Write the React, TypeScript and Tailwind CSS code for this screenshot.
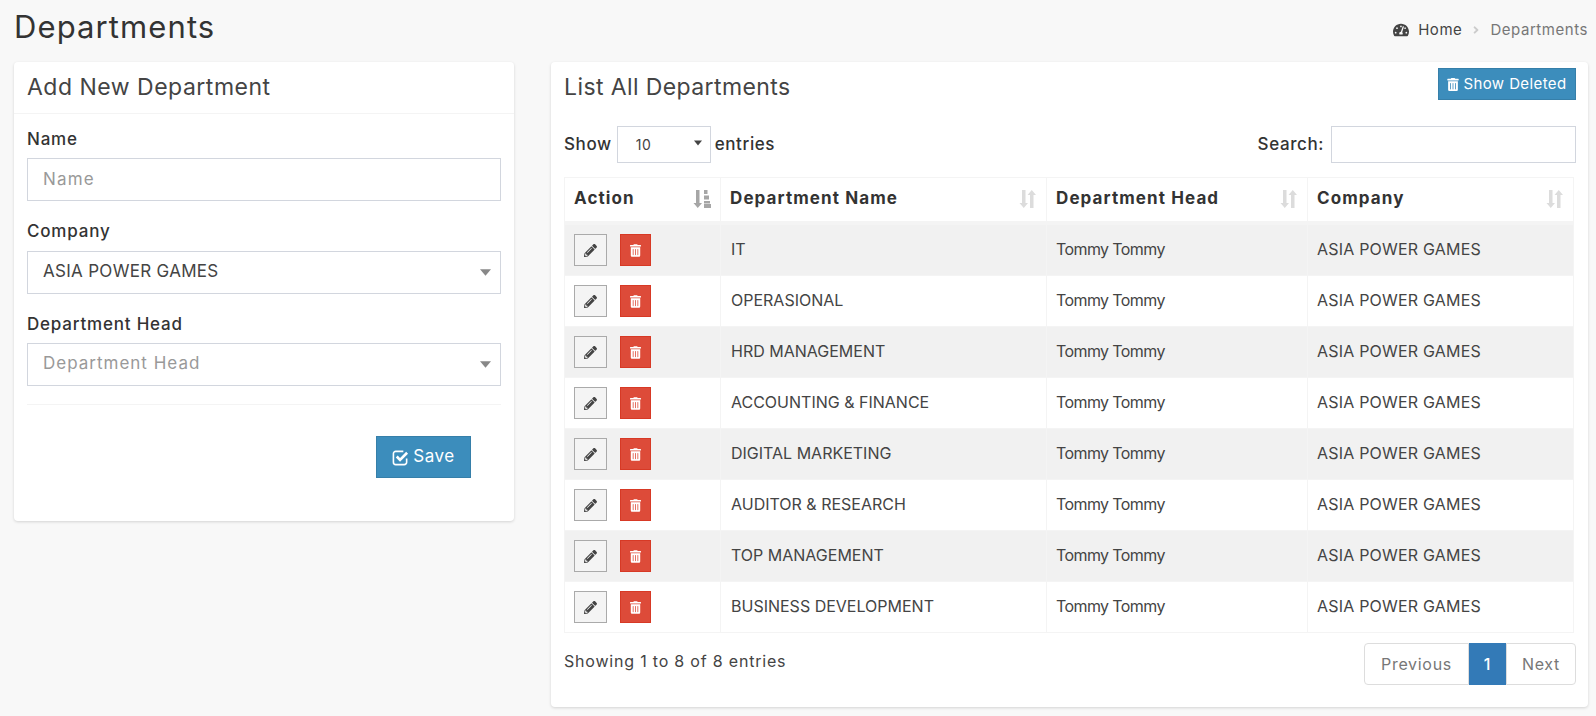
import { FaPencilAlt, FaTachometerAlt, FaTrashAlt, FaAngleRight } from "react-icons/fa";

const rows = [
  "IT",
  "OPERASIONAL",
  "HRD MANAGEMENT",
  "ACCOUNTING & FINANCE",
  "DIGITAL MARKETING",
  "AUDITOR & RESEARCH",
  "TOP MANAGEMENT",
  "BUSINESS DEVELOPMENT",
];

function Caret({ className }: { className: string }) {
  return (
    <svg viewBox="0 0 10 6" className={className}>
      <path d="M0 0h10L5 6z" fill="currentColor" />
    </svg>
  );
}

function SortIcon() {
  return (
    <svg viewBox="0 0 18 20" className="w-[18px] h-[20px] text-[#dcdcdc]">
      <path d="M3 1h3.500v13h2.500L4.750 19 .5 14H3z" fill="currentColor" />
      <path d="M11 19h3.500V6H17l-4.250-5L8.500 6H11z" fill="currentColor" />
    </svg>
  );
}

function SortActiveIcon() {
  return (
    <svg viewBox="0 0 18 20" className="w-[18px] h-[20px] text-[#a6a6a6]">
      <path d="M3 1h3.500v13h2.500L4.750 19 .5 14H3z" fill="currentColor" />
      <path d="M11 1h3.500v4H11zM11 6.500h5v4h-5zM11 12h6v2.500h-6zM11 15h7v4h-7z" fill="currentColor" />
    </svg>
  );
}

function CheckSquareIcon() {
  return (
    <svg viewBox="0 0 18 18" className="w-[17px] h-[17px]" fill="none" stroke="currentColor">
      <path d="M12 2.500H4A2.500 2.500 0 0 0 1.500 5v9A2.500 2.500 0 0 0 4 16.500h9a2.500 2.500 0 0 0 2.500-2.500v-4" strokeWidth="1.700" />
      <path d="M5 8l3.500 3.500L16 4" strokeWidth="2.800" />
    </svg>
  );
}

function SelectField({ value, muted }: { value: string; muted?: boolean }) {
  return (
    <div className="relative">
      <select
        defaultValue={value}
        className={`appearance-none block w-full h-[43px] pb-[2px] border border-[#d2d6de] bg-white pl-[15px] pr-8 text-[17px] rounded-none outline-none ${
          muted ? "text-[#999999] tracking-[1px]" : "text-[#444444] tracking-[0.3px]"
        }`}
      >
        <option>{value}</option>
      </select>
      <Caret className="absolute right-[10px] top-[18px] w-[11px] h-[7px] text-[#888888]" />
    </div>
  );
}

export default function App() {
  return (
    <div className="min-h-[716px] bg-[#f8f8f8] font-['Inter','Liberation_Sans',sans-serif] text-[#444444]">
      <div className="flex justify-between items-start h-[62px] pl-[14px] pr-2">
        <h1 className="pt-[8px] text-[31px] leading-[38px] tracking-[1.100px] text-[#333333]">Departments</h1>
        <div className="flex items-center pt-[20px] text-[15px] leading-[20px] tracking-[0.550px]">
          <FaTachometerAlt className="w-[16px] h-[16px] text-[#444444] mr-[9px]" />
          <span className="text-[#444444]">Home</span>
          <FaAngleRight className="w-3 h-3 mx-[8px] text-[#cccccc]" />
          <span className="text-[#777777]">Departments</span>
        </div>
      </div>

      <div className="flex items-start gap-[37px] pl-[14px] pr-2">
        {/* Add form */}
        <div className="w-[500px] h-[459px] bg-white rounded shadow-[0_1px_3px_rgba(0,0,0,0.15)]">
          <div className="h-[52px] px-[13px] flex items-center border-b border-[#f4f4f4]">
            <h3 className="text-[23px] tracking-[0.5px] text-[#444444]">Add New Department</h3>
          </div>
          <div className="px-[13px] pt-[13px]">
            <label className="block h-[31px] text-[17px] leading-[24px] tracking-[0.8px] font-medium text-[#333333]">Name</label>
            <input
              placeholder="Name"
              className="block w-full h-[43px] pb-[2px] border border-[#d2d6de] px-[15px] text-[17px] tracking-[1.200px] outline-none placeholder:text-[#999999]"
            />
            <label className="block mt-[18px] h-[32px] text-[17px] leading-[24px] tracking-[0.8px] font-medium text-[#333333]">Company</label>
            <SelectField value="ASIA POWER GAMES" />
            <label className="block mt-[18px] h-[31px] text-[17px] leading-[24px] tracking-[0.8px] font-medium text-[#333333]">Department Head</label>
            <SelectField value="Department Head" muted />
            <div className="mt-[18px] border-t border-[#f4f4f4]" />
            <div className="flex justify-end pr-[30px] pt-[31px]">
              <button className="flex items-center justify-center gap-[4px] w-[95px] h-[42px] bg-[#3c8dbc] border border-[#367fa9] text-white text-[17px] tracking-[0.5px]">
                <CheckSquareIcon />
                Save
              </button>
            </div>
          </div>
        </div>

        {/* List */}
        <div className="w-[1037px] h-[645px] bg-white rounded shadow-[0_1px_3px_rgba(0,0,0,0.15)] pl-[13px] pr-3">
          <div className="flex justify-between items-start h-[64px] pt-[6px]">
            <h3 className="pt-[1px] text-[23px] leading-[36px] tracking-[0.4px] text-[#444444]">List All Departments</h3>
            <button className="flex items-center justify-center gap-[4px] w-[138px] h-[32px] bg-[#3c8dbc] border border-[#367fa9] text-white text-[15px] tracking-[0.4px]">
              <FaTrashAlt className="w-[12px] h-[13px]" />
              Show Deleted
            </button>
          </div>

          <div className="flex justify-between items-center h-[37px] text-[17px] tracking-[0.6px] font-medium text-[#333333]">
            <div className="flex items-center gap-[4px]">
              <span className="mr-[1px]">Show</span>
              <div className="relative">
                <select
                  defaultValue="10"
                  className="appearance-none block w-[94px] h-[37px] border border-[#d2d6de] bg-white pl-[18px] text-[14px] font-normal text-[#444444] rounded-none outline-none"
                >
                  <option>10</option>
                </select>
                <Caret className="absolute right-[9px] top-[14px] w-[8px] h-[6px] text-[#444444]" />
              </div>
              <span>entries</span>
            </div>
            <div className="flex items-center gap-[7px]">
              <span>Search:</span>
              <input className="block w-[245px] h-[37px] border border-[#d2d6de] px-3 outline-none" />
            </div>
          </div>

          <table className="mt-[14px] w-[1009px] table-fixed border-collapse text-[16px]">
            <colgroup>
              <col className="w-[156px]" />
              <col className="w-[326px]" />
              <col className="w-[261px]" />
              <col className="w-[266px]" />
            </colgroup>
            <thead>
              <tr className="h-[45px] text-[#333333] text-[17px] tracking-[1.100px]">
                <th className="border border-[#f4f4f4] border-b-[3px] px-[9px] pb-[1px] text-left font-bold">
                  <div className="flex items-center justify-between">Action<SortActiveIcon /></div>
                </th>
                <th className="border border-[#f4f4f4] border-b-[3px] px-[9px] pb-[1px] text-left font-bold">
                  <div className="flex items-center justify-between">Department Name<SortIcon /></div>
                </th>
                <th className="border border-[#f4f4f4] border-b-[3px] px-[9px] pb-[1px] text-left font-bold">
                  <div className="flex items-center justify-between">Department Head<SortIcon /></div>
                </th>
                <th className="border border-[#f4f4f4] border-b-[3px] px-[9px] pb-[1px] text-left font-bold">
                  <div className="flex items-center justify-between">Company<SortIcon /></div>
                </th>
              </tr>
            </thead>
            <tbody>
              <tr className="h-px">
                <td colSpan={4} className="p-0 h-px" />
              </tr>
              {rows.map((name, i) => (
                <tr key={name} className={`h-[51px] ${i % 2 === 0 ? "bg-[#f1f1f1]" : "bg-white"}`}>
                  <td className="border border-[#f4f4f4] px-[9px]">
                    <div className="flex gap-[13px]">
                      <button className="flex items-center justify-center w-[33px] h-[32px] bg-[#f4f4f4] border border-[#aaaaaa] text-[#444444]">
                        <FaPencilAlt className="w-[13px] h-[13px]" />
                      </button>
                      <button className="flex items-center justify-center w-[31px] h-[32px] bg-[#dd4b39] border border-[#d73925] text-white">
                        <FaTrashAlt className="w-[11px] h-[13px]" />
                      </button>
                    </div>
                  </td>
                  <td className="border border-[#f4f4f4] pl-[10px] pr-[9px] pb-[2px]">{name}</td>
                  <td className="border border-[#f4f4f4] px-[9px] pb-[2px] tracking-[-0.6px]">Tommy Tommy</td>
                  <td className="border border-[#f4f4f4] px-[9px] pb-[2px] tracking-[0.2px]">ASIA POWER GAMES</td>
                </tr>
              ))}
            </tbody>
          </table>

          <div className="flex justify-between items-start pt-[10px]">
            <div className="pt-[8px] text-[16px] leading-[20px] tracking-[0.8px]">Showing 1 to 8 of 8 entries</div>
            <div className="flex h-[42px] text-[16px] tracking-[0.7px] text-[#777777]">
              <span className="flex items-center justify-center w-[105px] bg-white border border-[#dddddd] rounded-l">Previous</span>
              <span className="flex items-center justify-center w-[37px] bg-[#337ab7] text-white font-medium">1</span>
              <span className="flex items-center justify-center w-[70px] bg-white border border-[#dddddd] rounded-r">Next</span>
            </div>
          </div>
        </div>
      </div>
    </div>
  );
}
